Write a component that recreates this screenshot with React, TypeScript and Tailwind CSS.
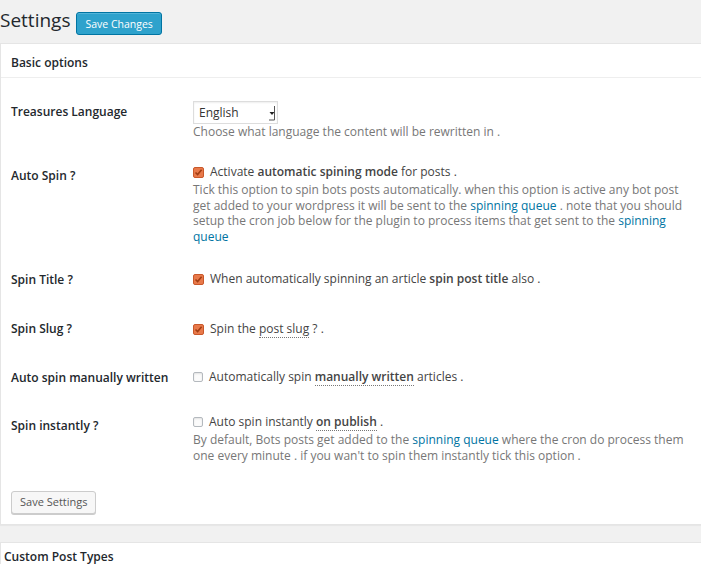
import React from 'react';

const font = { fontFamily: '"Open Sans", "Noto Sans", sans-serif' };

function Check({ checked }: { checked?: boolean }) {
    if (!checked) {
        return (
            <span className="inline-block h-[10px] w-[10px] shrink-0 rounded-[2px] border border-[#b4b9be] bg-[#fbfbfb] shadow-[inset_0_1px_2px_rgba(0,0,0,0.1)]" />
        );
    }
    return (
        <svg width="11" height="11" viewBox="0 0 11 11" className="shrink-0">
            <rect x="0.5" y="0.5" width="10" height="10" rx="1.5" fill="#e8794a" stroke="#c9582a" />
            <path d="M2.5 5.5 L4.6 7.6 L8.6 2.8" fill="none" stroke="#a23d12" strokeWidth="1.6" />
        </svg>
    );
}

function Link({ children }: { children: React.ReactNode }) {
    return <a className="text-[#0074a2]">{children}</a>;
}

function Abbr({ children, bold }: { children: React.ReactNode; bold?: boolean }) {
    return (
        <span
            className={
                bold
                    ? 'border-b border-dotted border-[#777] font-semibold text-[#444]'
                    : 'border-b border-dotted border-[#777]'
            }
        >
            {children}
        </span>
    );
}

function Row({
    label,
    labelPad,
    fieldPad,
    children,
}: {
    label: string;
    labelPad: string;
    fieldPad: string;
    children: React.ReactNode;
}) {
    return (
        <div className="flex">
            <div className={`w-[192px] shrink-0 pl-[10px] text-[12px] leading-[16px] font-semibold text-[#23282d] ${labelPad}`}>
                {label}
            </div>
            <div className={`w-[505px] text-[12px] leading-[16px] text-[#444] ${fieldPad}`}>{children}</div>
        </div>
    );
}

function CheckLine({ checked, children }: { checked?: boolean; children: React.ReactNode }) {
    return (
        <div className="flex items-center gap-[6px]">
            <Check checked={checked} />
            <span>{children}</span>
        </div>
    );
}

function Desc({ children }: { children: React.ReactNode }) {
    return <p className="mt-[2px] text-[12px] leading-[15.5px] text-[#777]">{children}</p>;
}

export default function App() {
    return (
        <div className="h-[564px] w-[701px] overflow-hidden bg-[#f1f1f1]" style={font}>
            <div className="flex h-[43px] items-start gap-[6px] pt-[8px]">
                <h1 className="text-[19px] leading-[24px] font-normal text-[#23282d]">Settings</h1>
                <button className="mt-[4px] h-[23px] rounded-[3px] border border-[#0074a2] bg-[#2ea2cc] px-[8px] text-[10.5px] leading-[20px] text-white shadow-[inset_0_1px_0_rgba(120,200,230,0.5)]">
                    Save Changes
                </button>
            </div>

            <div className="w-[720px] border border-[#e5e5e5] bg-white shadow-[0_1px_1px_rgba(0,0,0,0.04)]">
                <div className="h-[34px] border-b border-[#eee] pl-[10px] pt-[11px] text-[12px] leading-[16px] font-semibold text-[#23282d]">
                    Basic options
                </div>

                <Row label="Treasures Language" labelPad="pt-[26px]" fieldPad="pt-[23px] pb-[9px]">
                    <div className="flex h-[23px] w-[85px] items-center justify-between border border-[#ddd] bg-white pl-[5px] pr-[2px] text-[12px] text-[#333] shadow-[inset_0_1px_2px_rgba(0,0,0,0.07)]">
                        <span>English</span>
                        <svg width="6" height="16" viewBox="0 0 6 16">
                            <path d="M0.5 7 L5.5 7 L3 10 Z" fill="#222" />
                            <path d="M5.5 1 L5.5 15 L0 15" fill="none" stroke="#555" strokeWidth="1" />
                        </svg>
                    </div>
                    <p className="mt-0 text-[12px] leading-[16px] text-[#777]">
                        Choose what language the content will be rewritten in .
                    </p>
                </Row>

                <Row label="Auto Spin ?" labelPad="pt-[19px]" fieldPad="pt-[15px] pb-[12px]">
                    <CheckLine checked>
                        Activate <b className="font-semibold">automatic spining mode</b> for posts .
                    </CheckLine>
                    <Desc>
                        Tick this option to spin bots posts automatically. when this option is active any bot post
                        get added to your wordpress it will be sent to the <Link>spinning queue</Link> . note that you
                        should setup the cron job below for the plugin to process items that get sent to the{' '}
                        <Link>spinning queue</Link>
                    </Desc>
                </Row>

                <Row label="Spin Title ?" labelPad="pt-[16px]" fieldPad="pt-[15px] pb-[19px]">
                    <CheckLine checked>
                        When automatically spinning an article <b className="font-semibold">spin post title</b> also .
                    </CheckLine>
                </Row>

                <Row label="Spin Slug ?" labelPad="pt-[15px]" fieldPad="pt-[15px] pb-[17px]">
                    <CheckLine checked>
                        Spin the <Abbr>post slug</Abbr> ? .
                    </CheckLine>
                </Row>

                <Row label="Auto spin manually written" labelPad="pt-[16px]" fieldPad="pt-[15px] pb-[14px]">
                    <CheckLine>
                        Automatically spin <Abbr bold>manually written</Abbr> articles .
                    </CheckLine>
                </Row>

                <Row label="Spin instantly ?" labelPad="pt-[19px]" fieldPad="pt-[15px] pb-[0px]">
                    <CheckLine>
                        Auto spin instantly <Abbr bold>on publish</Abbr> .
                    </CheckLine>
                    <Desc>
                        By default, Bots posts get added to the <Link>spinning queue</Link> where the cron do process
                        them one every minute . if you wan't to spin them instantly tick this option .
                    </Desc>
                </Row>

                <div className="pl-[10px] pt-[25px] pb-[10px]">
                    <button className="h-[23px] rounded-[3px] border border-[#ccc] bg-[#f7f7f7] px-[8px] text-[11px] leading-[20px] text-[#555] shadow-[0_1px_0_#ccc]">
                        Save Settings
                    </button>
                </div>
            </div>

            <div className="mt-[17px] h-[40px] w-[720px] border border-[#e5e5e5] bg-white pl-[3px] pt-[6px] text-[12px] leading-[16px] font-semibold text-[#23282d]">
                Custom Post Types
            </div>
        </div>
    );
}
